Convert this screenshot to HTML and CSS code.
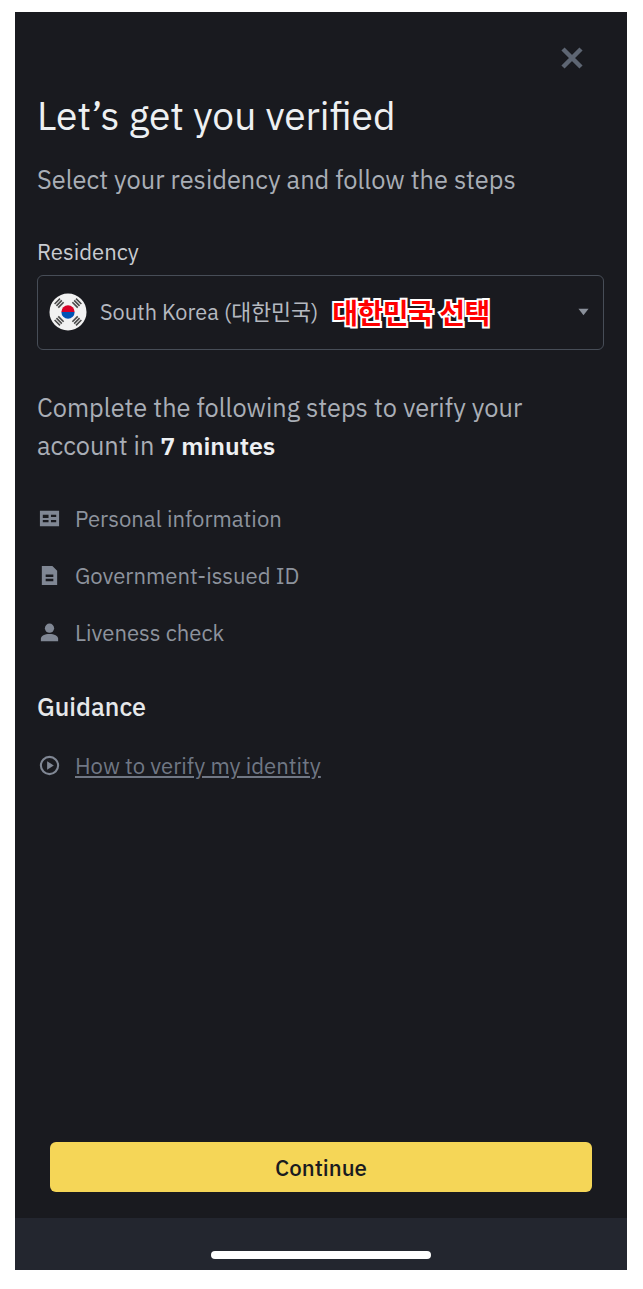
FILE: index.html
```html
<!DOCTYPE html>
<html lang="en">
<head>
<meta charset="utf-8">
<title>Let's get you verified</title>
<link rel="stylesheet" href="styles.css">
</head>
<body>
<div class="phone">
  <main class="content">
    <div class="close-row">
      <svg class="close" viewBox="0 0 24 24" aria-label="Close"><path d="M3 3 L21 21 M21 3 L3 21"/></svg>
    </div>
    <h1 class="title">Let’s get you verified</h1>
    <p class="subtitle">Select your residency and follow the steps</p>
    <div class="label">Residency</div>
    <div class="select">
      <svg class="flag" viewBox="0 0 40 40">
        <defs>
          <g id="trigram" stroke="#4a4a4a" stroke-width="1.700">
            <path d="M16 9.500h8M16 6.800h8M16 4.100h8"/>
          </g>
        </defs>
        <circle cx="20" cy="20" r="19.500" fill="#f2f2f2"/>
        <path d="M13 20a7 7 0 0 1 14 0z" fill="#d80027"/>
        <path d="M13 20a7 7 0 0 0 14 0z" fill="#0052b4"/>
        <use href="#trigram" transform="rotate(45 20 20)"/>
        <use href="#trigram" transform="rotate(135 20 20)"/>
        <use href="#trigram" transform="rotate(225 20 20)"/>
        <use href="#trigram" transform="rotate(315 20 20)"/>
      </svg>
      <span class="country">South Korea (대한민국)</span>
      <span class="note">대한민국 선택</span>
      <svg class="caret" viewBox="0 0 12 8"><path d="M0.500 0.500h11L6 7.500z"/></svg>
    </div>
    <p class="intro">Complete the following steps to verify your account in <strong>7 minutes</strong></p>
    <ul class="steps">
      <li class="step">
        <svg class="icon" viewBox="0 0 24 24"><path fill-rule="evenodd" d="M2 4h20v16H2zM5 8v3.500h6V8zM13.500 8v2.500H19V8zM13.500 13.500V16H19v-2.500zM5 13.500V16h6v-2.500z"/></svg>
        <span>Personal information</span>
      </li>
      <li class="step">
        <svg class="icon" viewBox="0 0 24 24"><path fill-rule="evenodd" d="M4 2h11l5 5v15H4zM8 11v2.500h8V11zM8 15.500V18h8v-2.500z"/></svg>
        <span>Government-issued ID</span>
      </li>
      <li class="step">
        <svg class="icon" viewBox="0 0 24 24"><circle cx="12" cy="7.500" r="4.800"/><path d="M3 21v-2.500c0-3 4-5 9-5s9 2 9 5V21z"/></svg>
        <span>Liveness check</span>
      </li>
    </ul>
    <h2 class="guidance">Guidance</h2>
    <div class="step link-row">
      <svg class="icon" viewBox="0 0 24 24"><circle class="ring" cx="12" cy="12" r="9"/><path d="M9.500 7.500l7 4.500-7 4.500z"/></svg>
      <a class="link" href="#">How to verify my identity</a>
    </div>
    <button class="continue" type="button">Continue</button>
  </main>
  <footer class="home-bar"><span class="indicator"></span></footer>
</div>
</body>
</html>
```
FILE: styles.css
```css
* { box-sizing: border-box; }
html, body { margin: 0; padding: 0; background: #fff; }
body {
  padding: 12px 16px 19px 15px;
  font-family: "IBM Plex Sans", "Noto Sans", "Noto Sans CJK KR", sans-serif;
}
.phone {
  height: 1258px;
  display: flex;
  flex-direction: column;
  background: #191a1f;
}
.content {
  flex: 1;
  display: flex;
  flex-direction: column;
  padding: 0 22px 26px;
  min-height: 0;
}
.close-row { display: flex; justify-content: flex-end; padding: 34px 21px 0 0; height: 69px; }
.close { width: 24px; height: 24px; }
.close path { stroke: #5e6673; stroke-width: 4.500; fill: none; }
.title {
  margin: 12px 0 0;
  font-size: 38.900px;
  line-height: 46px;
  font-weight: 400;
  color: #eef0f2;
}
.subtitle {
  margin: 24px 0 0;
  font-size: 25.350px;
  line-height: 34px;
  color: #a9aeb6;
}
.label { margin-top: 40px; font-size: 22.100px; line-height: 30px; color: #c9ccd1; }
.select {
  margin: 8px 1px 0 0;
  height: 75px;
  display: flex;
  align-items: center;
  padding: 0 14px 2px 11px;
  border: 1.500px solid #474d57;
  border-radius: 6px;
}
.flag { width: 38px; height: 38px; flex: none; }
.country { margin: 0 0 2px 13px; font-size: 21.700px; color: #b5b9c0; }
.note {
  margin-left: 14px;
  font-family: "Noto Sans CJK KR", sans-serif;
  font-size: 28px;
  font-weight: 700;
  color: #f00;
  -webkit-text-stroke: 4px #fff;
  paint-order: stroke fill;
  letter-spacing: -0.5px;
}
.caret { margin: 1px 0 0 auto; width: 11px; height: 8px; fill: #8a909a; }
.intro {
  margin: 39px 0 0;
  font-size: 25.350px;
  line-height: 38px;
  color: #a9aeb6;
  max-width: 530px;
}
.intro strong { color: #eef0f2; font-weight: 600; font-size: 25px; }
.steps { list-style: none; margin: 38px 0 0; padding: 0; display: flex; flex-direction: column; gap: 27px; }
.step { display: flex; align-items: center; gap: 14px; height: 30px; font-size: 22.100px; color: #8d939d; }
.icon { width: 23px; height: 23px; flex: none; margin-left: 1px; fill: #808794; }
.icon .ring { fill: none; stroke: #808794; stroke-width: 2.200; }
.guidance { margin: 45px 0 0; font-size: 25.200px; line-height: 30px; font-weight: 500; color: #e6e8ea; }
.link-row { margin-top: 28px; }
.link { color: #707784; text-decoration: underline; }
.continue {
  margin: auto 13px 0;
  height: 50px;
  flex: none;
  border: 0;
  border-radius: 6px;
  background: #f5d657;
  color: #1a1b20;
  font: 500 22.300px "IBM Plex Sans", "Noto Sans", sans-serif;
}
.home-bar {
  flex: none;
  height: 52px;
  display: flex;
  justify-content: center;
  align-items: flex-end;
  padding-bottom: 11px;
  background: #23262f;
}
.indicator { width: 220px; height: 8px; border-radius: 4px; background: #fff; }
```
